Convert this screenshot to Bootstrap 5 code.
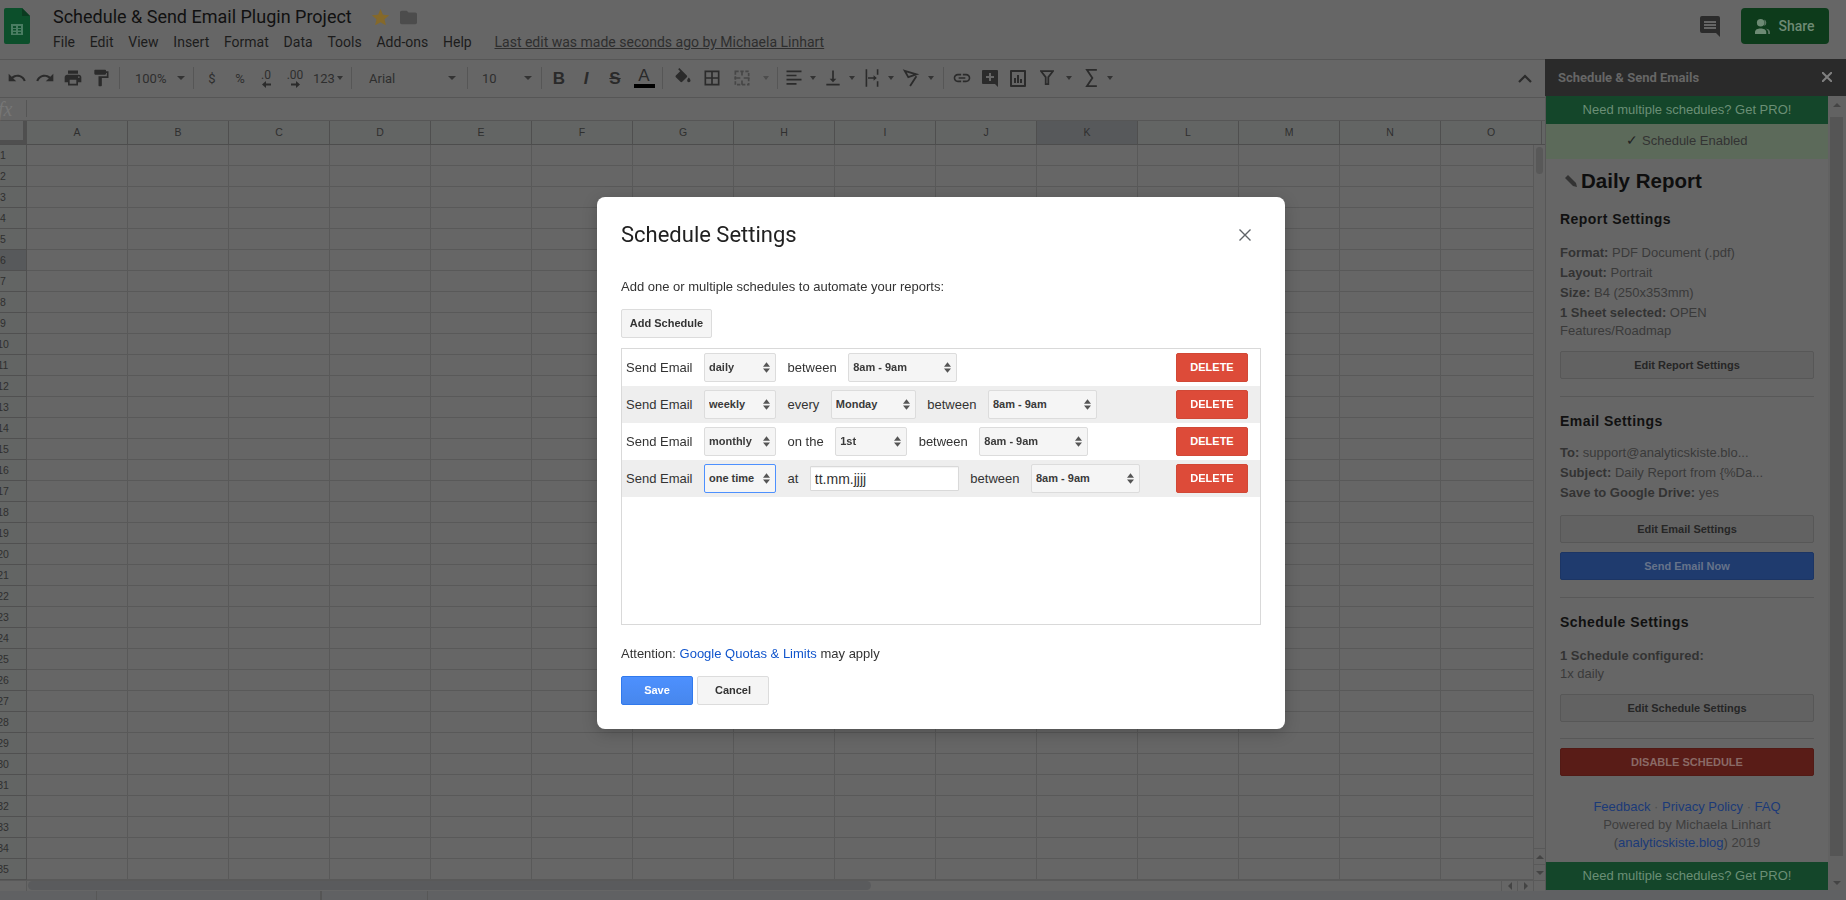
<!DOCTYPE html>
<html lang="en">
<head>
    <meta charset="UTF-8">
    <meta name="viewport" content="width=device-width, initial-scale=1.0">
    <title>Schedule Settings</title>
    <link href="https://cdn.jsdelivr.net/npm/bootstrap@5.3.0/dist/css/bootstrap.min.css" rel="stylesheet">

    <style>
        html, body { height: 100%; overflow: hidden; }
        body { background: #666; font-family: Roboto, "Liberation Sans", sans-serif; color: #222; }

        /* title bar */
        .title-bar { height: 59px; }
        .logo-box { width: 53px; padding: 8px 0 0 4px; }
        .doc-name { font-size: 18px; line-height: 24px; color: #111; padding-top: 3px; height: 31px; }
        .doc-icons svg { display: block; }
        .star-ico { margin-left: 20px; }
        .folder-ico { margin-left: 11px; }
        .menu-row { font-size: 14px; line-height: 20px; color: #1c1c1c; margin-top: 1px; }
        .menu-row span { margin-right: 14.8px; }
        .last-edit { color: #2e2e2e; text-decoration: underline; margin-left: 8px; font-size: 14px; }
        .last-edit:hover { color: #2e2e2e; }
        .comment-ico { margin-right: 21px; }
        .share-btn { width: 88px; height: 36px; margin: 8px 17px 0 0; background: #0d3b1b; border: 0; border-radius: 4px; color: #6d8a74; font-size: 14px; font-weight: 500; }

        /* toolbar */
        .main-area { height: 841px; }
        .work-col { width: 1545px; }
        .tool-row { height: 39px; border-top: 1px solid #565656; border-bottom: 1px solid #565656; padding-left: 3px; color: #2e2e2e; font-size: 13px; }
        .tb { display: flex; align-items: center; justify-content: center; height: 100%; flex: none; }
        .w6 { width: 8px; } .w14 { width: 14px; } .w16 { width: 16px; } .w24 { width: 24px; } .w25 { width: 25px; }
        .w26 { width: 26px; } .w28 { width: 28px; } .w30 { width: 30px; } .w32 { width: 32px; } .w34 { width: 34px; }
        .tb-sep { width: 1px; height: 22px; margin: 0 4px; background: #565656; flex: none; }
        .tb-drop { justify-content: space-between; }
        .drop-zoom { width: 65px; padding: 0 4px 0 11px; }
        .drop-num { width: 35px; padding: 0 4px 0 1px; }
        .drop-font { width: 107px; padding: 0 7px 0 13px; }
        .drop-size { width: 65px; padding: 0 5px 0 10px; }
        .t-caret { width: 0; height: 0; border-left: 4px solid transparent; border-right: 4px solid transparent; border-top: 4px solid #333; flex: none; }
        .t-caret-sm { border-left-width: 3px; border-right-width: 3px; }
        .t-let { font-family: "Liberation Sans", sans-serif; font-size: 17px; font-weight: 700; color: #2a2a2a; }
        .t-it { font-style: italic; }
        .t-a { flex-direction: column; line-height: 15px; font-weight: 400; }
        .t-bar { width: 21px; height: 4px; background: #000; margin-top: 1px; }
        .dec-txt { font-size: 12px; line-height: 12px; flex-direction: column; }
        .chev-up { width: 20px; margin: 0 10px 0 auto; }

        /* formula bar */
        .fx-row { height: 24px; border-bottom: 1px solid #565656; }
        .fx-txt { width: 16px; margin-left: -2px; margin-right: 2px; font-family: "Liberation Serif", serif; font-style: italic; font-size: 20px; line-height: 22px; color: #767676; }
        .fx-sep { width: 1px; height: 17px; margin: 2px 0 0 10px; background: #555; }

        /* sheet */
        .col-heads { height: 24px; border-bottom: 1px solid #4d4d4d; }
        .corner { width: 27px; border-right: 4px solid #4f4f4f; border-bottom: 4px solid #4f4f4f; background: #636464; flex: none; }
        .col-h { width: 101px; flex: none; background: #636564; border-right: 1px solid #4f4f4f; text-align: center; line-height: 22px; font-size: 10.5px; color: #2f2f2f; font-family: "Liberation Sans", sans-serif; }
        .col-last { width: 92px; border-right: 1px solid #4f4f4f; }
        .col-sel { background: #57595b; }
        .sheet-body { height: 735px; }
        .row-heads { width: 27px; flex: none; overflow: hidden; }
        .row-h { height: 21px; background: #636564; border-right: 1px solid #4f4f4f; border-bottom: 1px solid #505050; font-size: 10.5px; line-height: 21px; color: #2f2f2f; font-family: "Liberation Sans", sans-serif; position: relative; }
        .row-h span { position: absolute; right: 23px; transform: translateX(50%); }
        .row-sel { background: #57595b; }
        .cells { width: 1506px; flex: none; background-color: #666; background-image: linear-gradient(to right, transparent 100px, #595959 100px), linear-gradient(to bottom, transparent 20px, #595959 20px); background-size: 101px 21px; }
        .v-scroll { width: 12px; flex: none; border-left: 1px solid #595959; background: #656565; padding-top: 2px; }
        .v-thumb { width: 7px; height: 27px; margin-left: 2px; background: #585858; border-radius: 4px; }
        .arrow-cell { height: 16px; border-top: 1px solid #595959; display: flex; align-items: center; justify-content: center; }
        .h-scroll { height: 11px; border-top: 1px solid #595959; }
        .h-left { width: 27px; border-right: 1px solid #595959; flex: none; }
        .h-thumb { width: 843px; height: 9px; margin-left: 1px; background: #5a5b5d; border-radius: 5px; }
        .h-arrow { width: 16px; border-left: 1px solid #595959; display: flex; align-items: center; justify-content: center; flex: none; }
        .h-gap { width: 12px; flex: none; border-left: 1px solid #595959; }
        .arr { width: 0; height: 0; border-style: solid; border-color: transparent; }
        .arr-up { border-width: 0 4px 4px; border-bottom-color: #444; }
        .arr-down { border-width: 4px 4px 0; border-top-color: #444; }
        .arr-left { border-width: 4px 4px 4px 0; border-right-color: #444; }
        .arr-right { border-width: 4px 0 4px 4px; border-left-color: #444; }
        .tab-bar { height: 9px; background: #606163; flex: none; }
        .tab-s1 { width: 97px; border-right: 1px solid #575757; }
        .tab-s2 { width: 225px; border-right: 2px solid #555; }
        .tab-s3 { width: 106px; border-right: 1px solid #575757; }

        /* sidebar */
        .side-panel { width: 301px; flex: none; font-family: "Liberation Sans", sans-serif; color: #3c3c3c; font-size: 13px; }
        .side-head { height: 37px; background: #2a2a2a; padding: 0 14px 0 13px; color: #666; font-family: Roboto, sans-serif; font-weight: 700; font-size: 13px; }
        .side-wrap { height: 795px; }
        .side-main { width: 283px; flex: none; border-left: 1px solid #575757; }
        .side-scroll { width: 18px; flex: none; background: #626262; padding: 2px 3px 0 2px; }
        .side-thumb { height: 739px; margin-top: 5px; background: #555; }
        .side-arr { height: 14px; display: flex; align-items: center; justify-content: center; }
        .pro-banner { height: 28px; background: #14462a; color: #6b8f76; text-align: center; line-height: 27px; font-size: 13px; flex: none; }
        .on-banner { height: 35px; background: #5c6a5a; color: #333; text-align: center; line-height: 34px; font-size: 13px; flex: none; }
        .on-check { font-size: 14px; line-height: 14px; color: #222; }
        .side-body { padding: 0 14px; }
        .rep-title { font-size: 20.5px; font-weight: 700; line-height: 24px; margin: 10px 0 0 5px; color: #0e0e0e; }
        .sec-title { font-size: 14px; font-weight: 700; line-height: 20px; letter-spacing: .45px; color: #111; margin: 0; }
        .mt16 { margin-top: 16px; } .mt14 { margin-top: 14px; }
        .info-line { line-height: 18px; margin: 0 0 2px; color: #3a3a3a; }
        .info-line b { color: #333; }
        .info-first { margin-top: 13px; }
        .info-top { margin-top: 15px; }
        .nb { margin-bottom: 0; }
        .side-btn { display: block; width: 100%; height: 28px; padding: 0; border: 1px solid #575757; border-radius: 2px; background: #626262; color: #262626; font-size: 11px; font-weight: 700; }
        .side-btn:hover { background: #626262; color: #262626; border-color: #575757; }
        .mt9 { margin-top: 9px; } .mt11 { margin-top: 11px; } .mt13 { margin-top: 13px; }
        .btn-send, .btn-send:hover { background: #1f3b6e; border-color: #1c3564; color: #66738a; }
        .btn-off, .btn-off:hover { background: #591c17; border-color: #521a15; color: #8a6a66; }
        .side-rule { margin: 17px 0 0; height: 1px; border: 0; background: #585858; opacity: 1; }
        .rule-c { margin-top: 16px; }
        .foot-txt { margin-top: 22px; line-height: 18px; text-align: center; color: #3e3e3e; }
        .foot-txt a, .foot-txt a:hover { color: #1b3a78; text-decoration: none; }
        .foot-txt i { font-style: normal; color: #4d4d4d; }
        .side-tail { height: 10px; background: #606163; flex: none; }

        /* dialog */
        .dlg.modal { z-index: 1000; font-family: "Liberation Sans", sans-serif; }
        .dlg-box.modal-dialog { max-width: 688px; width: 688px; margin: 197px 0 0 597px; }
        .dlg-box .modal-content { height: 532px; border: 0; border-radius: 8px; padding: 0 24px; color: #333; font-size: 13px; box-shadow: 0 4px 16px rgba(0,0,0,.2); }
        .dlg-title { font-family: Roboto, sans-serif; font-size: 22px; font-weight: 400; line-height: 28px; color: #212121; margin: 24px 0 0; }
        .dlg-close { border: 0; background: none; padding: 0; width: 12px; height: 12px; margin: 0 10px 0 0; display: flex; }
        .dlg-hint { margin: 29px 0 0; line-height: 18px; }
        .plain-btn { height: 29px; padding: 0; border: 1px solid #dcdcdc; border-radius: 2px; background: #f5f5f5; color: #333; font-size: 11px; font-weight: 700; }
        .plain-btn:hover { background: #f5f5f5; color: #333; border-color: #dcdcdc; }
        .add-btn { width: 91px; margin-top: 13px; }
        .sched-box { height: 277px; margin-top: 10px; width: 640px; border: 1px solid #d9d9d9; }
        .sched-row { height: 37px; padding: 0 12px 0 4px; gap: 11.5px; flex: none; }
        .sched-row:nth-child(even) { background: #eee; }
        .sched-row > span { font-size: 13px; white-space: nowrap; }
        .sched-lab { width: 66.500px; }
        .sched-sel.form-select { height: 29px; min-height: 0; padding: 0 14px 0 4px; border: 1px solid #dcdcdc; border-radius: 2px; background-color: #f5f5f5; color: #3a3a3a; font-size: 11px; font-weight: 700; box-shadow: none; flex: none;
            background-image: url("data:image/svg+xml,%3Csvg xmlns='http://www.w3.org/2000/svg' viewBox='0 0 8 12'%3E%3Cpath fill='%23555' d='M4 0l4 5H0zM4 12L0 7h8z'/%3E%3C/svg%3E");
            background-size: 7px 11px; background-position: right 5px center; }
        .sw72 { width: 72px; } .sw85 { width: 85px; } .sw109 { width: 109px; }
        .sched-sel.sel-focus { border-color: #4d90fe; }
        .date-in.form-control { width: 149px; height: 25px; min-height: 0; padding: 0 4px; border: 1px solid #d9d9d9; border-radius: 1px; font-size: 14px; color: #333; flex: none; box-shadow: inset 0 1px 1px rgba(0,0,0,.05); }
        .del-btn, .del-btn:hover { width: 72px; height: 29px; padding: 0; margin-left: auto; background: #dd4b39; border: 1px solid #d14836; border-radius: 2px; color: #fff; font-size: 11px; font-weight: 700; flex: none; }
        .dlg-note { margin: 20px 0 0; line-height: 18px; }
        .dlg-note a, .dlg-note a:hover { color: #1155cc; text-decoration: none; }
        .dlg-actions { margin-top: 13px; gap: 4px; }
        .save-btn, .save-btn:hover { width: 72px; height: 29px; padding: 0; background: linear-gradient(#4d90fe, #4787ed); border: 1px solid #3079ed; border-radius: 2px; color: #fff; font-size: 11px; font-weight: 700; }
        .cancel-btn { width: 72px; }
    </style>
</head>
<body>
    <!-- title bar -->
    <div class="title-bar d-flex">
        <div class="logo-box">
            <svg width="26" height="36" viewBox="0 0 26 36">
                <path d="M2 0h16l8 8v26a2 2 0 0 1-2 2H2a2 2 0 0 1-2-2V2a2 2 0 0 1 2-2z" fill="#0c4f2b"/>
                <path d="M18 0l8 8h-8z" fill="#0a3b20"/>
                <path d="M7 16h12v11H7z" fill="#4a7d62"/>
                <path d="M9 18h3v2H9zM14 18h3v2h-3zM9 21h3v1.500H9zM14 21h3v1.500h-3zM9 24h3v1.500H9zM14 24h3v1.500h-3z" fill="#0c4f2b"/>
            </svg>
        </div>
        <div class="flex-grow-1">
            <div class="doc-name d-flex align-items-center doc-icons">
                <span>Schedule &amp; Send Email Plugin Project</span>
                <svg class="star-ico" width="17" height="16" viewBox="0 0 24 23"><path fill="#85692a" d="M12 0l3.500 8.300 9 .7-6.800 5.900 2.100 8.700L12 18.900l-7.800 4.700 2.100-8.700L-.5 9l9-.7z"/></svg>
                <svg class="folder-ico" width="17" height="15" viewBox="0 0 20 16"><path fill="#4c4c4c" d="M8 0H2C.9 0 0 .9 0 2v12c0 1.100.9 2 2 2h16c1.100 0 2-.9 2-2V4c0-1.100-.9-2-2-2h-8z"/></svg>
            </div>
            <div class="menu-row d-flex">
                <span>File</span><span>Edit</span><span>View</span><span>Insert</span><span>Format</span><span>Data</span><span>Tools</span><span>Add-ons</span><span>Help</span>
                <a class="last-edit" href="#">Last edit was made seconds ago by Michaela Linhart</a>
            </div>
        </div>
        <div class="d-flex align-items-start">
            <svg class="comment-ico mt-3" width="20" height="21" viewBox="0 0 20 21">
                <path fill="#2b2b2b" d="M2 0h16a2 2 0 0 1 2 2v19l-4-4H2a2 2 0 0 1-2-2V2a2 2 0 0 1 2-2z"/>
                <path fill="#666" d="M4 5h12v2H4zM4 8h12v2H4zM4 11h12v2H4z"/>
            </svg>
            <button class="share-btn btn d-flex align-items-center justify-content-center gap-2 p-0">
                <svg width="15" height="15" viewBox="0 0 16 16"><circle cx="6" cy="4" r="4" fill="#6d8a74"/><path fill="#6d8a74" d="M0 16v-2c0-3 3-4 6-4s6 1 6 4v2z"/><path fill="#5a7562" d="M10 .5a4 4 0 0 1 0 7zM11 10c3 .3 5 1.500 5 4v2h-2v-2c0-1.500-1-3-3-4z"/></svg>
                Share
            </button>
        </div>
    </div>

    <div class="main-area d-flex">
        <div class="work-col d-flex flex-column">
            <!-- toolbar -->
            <div class="tool-row d-flex align-items-center">
                <span class="tb w28"><svg width="20" height="20" viewBox="0 0 24 24"><path fill="#2b2b2b" d="M12.500 8c-2.650 0-5.050.99-6.900 2.600L2 7v9h9l-3.620-3.620c1.390-1.160 3.160-1.880 5.120-1.880 3.540 0 6.550 2.310 7.600 5.500l2.370-.78C21.080 11.030 17.150 8 12.500 8z"/></svg></span>
                <span class="tb w28"><svg width="20" height="20" viewBox="0 0 24 24"><path fill="#2b2b2b" d="M18.400 10.600C16.550 8.990 14.150 8 11.500 8c-4.650 0-8.580 3.030-9.960 7.220L3.900 16c1.050-3.190 4.050-5.500 7.600-5.500 1.950 0 3.730.72 5.120 1.880L13 16h9V7l-3.600 3.600z"/></svg></span>
                <span class="tb w28"><svg width="20" height="20" viewBox="0 0 24 24"><path fill="#2b2b2b" d="M19 8H5c-1.660 0-3 1.340-3 3v6h4v4h12v-4h4v-6c0-1.660-1.340-3-3-3zm-3 11H8v-5h8v5zm3-7c-.55 0-1-.45-1-1s.45-1 1-1 1 .45 1 1-.45 1-1 1zm-1-9H6v4h12V3z"/></svg></span>
                <span class="tb w28"><svg width="20" height="20" viewBox="0 0 24 24"><path fill="#2b2b2b" d="M18 4V3c0-.55-.45-1-1-1H5c-.55 0-1 .45-1 1v4c0 .55.45 1 1 1h12c.55 0 1-.45 1-1V6h1v4H9v11c0 .55.45 1 1 1h2c.55 0 1-.45 1-1v-9h8V4h-3z"/></svg></span>
                <span class="tb-sep"></span>
                <span class="tb tb-drop drop-zoom"><span>100%</span><i class="t-caret"></i></span>
                <span class="tb-sep"></span>
                <span class="tb w28">$</span>
                <span class="tb w28">%</span>
                <span class="tb w24 dec-txt"><span>.0</span><svg width="9" height="7" viewBox="0 0 9 7"><path fill="#2b2b2b" d="M0 3.500L4 0v2.500h5v2H4V7z"/></svg></span>
                <span class="tb w34 dec-txt"><span>.00</span><svg width="9" height="7" viewBox="0 0 9 7"><path fill="#2b2b2b" d="M9 3.500L5 0v2.500H0v2h5V7z"/></svg></span>
                <span class="tb tb-drop drop-num"><span>123</span><i class="t-caret t-caret-sm"></i></span>
                <span class="tb-sep"></span>
                <span class="tb tb-drop drop-font"><span>Arial</span><i class="t-caret"></i></span>
                <span class="tb-sep"></span>
                <span class="tb tb-drop drop-size"><span>10</span><i class="t-caret"></i></span>
                <span class="tb-sep"></span>
                <span class="tb w26 t-let">B</span>
                <span class="tb w28 t-let t-it">I</span>
                <span class="tb w30 t-let"><s>S</s></span>
                <span class="tb w28 t-let t-a"><span>A</span><i class="t-bar"></i></span>
                <span class="tb-sep"></span>
                <span class="tb w32"><svg width="20" height="20" viewBox="0 0 24 24"><path fill="#2b2b2b" d="M16.560 8.940L7.620 0 6.210 1.410l2.380 2.380-5.150 5.150c-.59.59-.59 1.540 0 2.120l5.500 5.500c.29.29.68.44 1.060.44s.77-.15 1.060-.44l5.500-5.500c.59-.58.59-1.530 0-2.120zM19 11.500s-2 2.170-2 3.500c0 1.100.9 2 2 2s2-.9 2-2c0-1.330-2-3.500-2-3.500z"/></svg></span>
                <span class="tb w26"><svg width="20" height="20" viewBox="0 0 24 24"><path fill="#2b2b2b" d="M3 3v18h18V3H3zm8 16H5v-6h6v6zm0-8H5V5h6v6zm8 8h-6v-6h6v6zm0-8h-6V5h6v6z"/></svg></span>
                <span class="tb w34"><svg width="20" height="20" viewBox="0 0 24 24"><path fill="none" stroke="#474747" stroke-width="2" stroke-dasharray="4 2" d="M4 4h16v16H4z"/><path fill="#474747" d="M3 11h7v2H3zM14 11h7v2h-7zM11 4h2v5h-2zM11 15h2v5h-2z"/></svg></span>
                <span class="tb w14"><i class="t-caret t-caret-sm opacity-50"></i></span>
                <span class="tb-sep"></span>
                <span class="tb w24"><svg width="20" height="20" viewBox="0 0 24 24"><path fill="#2b2b2b" d="M3 3h18v2H3zM3 8h12v2H3zM3 13h18v2H3zM3 18h12v2H3z"/></svg></span>
                <span class="tb w14"><i class="t-caret t-caret-sm"></i></span>
                <span class="tb w25"><svg width="20" height="20" viewBox="0 0 24 24"><path fill="#2b2b2b" d="M16 13h-3V3h-2v10H8l4 4 4-4zM4 19v2h16v-2H4z"/></svg></span>
                <span class="tb w14"><i class="t-caret t-caret-sm"></i></span>
                <span class="tb w25"><svg width="16" height="18" viewBox="0 0 20 22"><path fill="#2b2b2b" d="M2 0h2v22H2zM16 0h2v7h-2zM16 15h2v7h-2zM5 10h7V7.500l4 3.500-4 3.500V12H5z"/></svg></span>
                <span class="tb w14"><i class="t-caret t-caret-sm"></i></span>
                <span class="tb w25"><svg width="18" height="18" viewBox="0 0 20 20"><path fill="none" stroke="#2b2b2b" stroke-width="2" d="M3 2l13 4-9 3zM16 8L9 19"/></svg></span>
                <span class="tb w16"><i class="t-caret t-caret-sm"></i></span>
                <span class="tb-sep"></span>
                <span class="tb w28"><svg width="20" height="20" viewBox="0 0 24 24"><path fill="#2b2b2b" d="M3.900 12c0-1.710 1.390-3.100 3.100-3.100h4V7H7c-2.760 0-5 2.240-5 5s2.240 5 5 5h4v-1.900H7c-1.710 0-3.100-1.390-3.100-3.100zM8 13h8v-2H8v2zm9-6h-4v1.900h4c1.710 0 3.100 1.390 3.100 3.100s-1.390 3.100-3.100 3.100h-4V17h4c2.760 0 5-2.240 5-5s-2.240-5-5-5z"/></svg></span>
                <span class="tb w28"><svg width="16" height="17" viewBox="0 0 16 17"><path fill="#2b2b2b" d="M1 0h14a1 1 0 0 1 1 1v16l-3-3H1a1 1 0 0 1-1-1V1a1 1 0 0 1 1-1z"/><path fill="#666" d="M7 3h2v3h3v2H9v3H7V8H4V6h3z"/></svg></span>
                <span class="tb w28"><svg width="16" height="17" viewBox="0 0 16 17"><path fill="#2b2b2b" d="M1 0h14a1 1 0 0 1 1 1v15a1 1 0 0 1-1 1H1a1 1 0 0 1-1-1V1a1 1 0 0 1 1-1zm1 2v13h12V2z"/><path fill="#2b2b2b" d="M4 8h2v5H4zM7 5h2v8H7zM10 9h2v4h-2z"/></svg></span>
                <span class="tb w30"><svg width="14" height="16" viewBox="0 0 16 18"><path fill="none" stroke="#2b2b2b" stroke-width="2" d="M1 1h14L9.500 8v8h-3V8z"/></svg></span>
                <span class="tb w14"><i class="t-caret t-caret-sm"></i></span>
                <span class="tb w30"><svg width="12" height="18" viewBox="0 0 13 20"><path fill="none" stroke="#2b2b2b" stroke-width="2" d="M13 1H2l6 9-6 9h11"/></svg></span>
                <span class="tb w6"><i class="t-caret t-caret-sm"></i></span>
                <span class="tb chev-up"><svg width="14" height="9" viewBox="0 0 14 9"><path fill="none" stroke="#2b2b2b" stroke-width="2.200" d="M1 8l6-6 6 6"/></svg></span>
            </div>

            <!-- formula bar -->
            <div class="fx-row d-flex">
                <span class="fx-txt">fx</span>
                <span class="fx-sep"></span>
            </div>

            <!-- sheet -->
            <div class="col-heads d-flex" id="col-heads"><div class="corner"></div></div>
            <div class="sheet-body d-flex">
                <div class="row-heads" id="row-heads"></div>
                <div class="cells"></div>
                <div class="v-scroll d-flex flex-column">
                    <div class="v-thumb"></div>
                    <div class="arrow-cell mt-auto"><i class="arr arr-up"></i></div>
                    <div class="arrow-cell"><i class="arr arr-down"></i></div>
                </div>
            </div>
            <div class="h-scroll d-flex">
                <div class="h-left"></div>
                <div class="h-thumb"></div>
                <div class="h-arrow ms-auto"><i class="arr arr-left"></i></div>
                <div class="h-arrow"><i class="arr arr-right"></i></div>
                <div class="h-gap"></div>
            </div>
            <div class="tab-bar d-flex">
                <div class="tab-s1"></div><div class="tab-s2"></div><div class="tab-s3"></div>
            </div>
        </div>

        <!-- sidebar -->
        <div class="side-panel d-flex flex-column">
            <div class="side-head d-flex align-items-center justify-content-between">
                <span>Schedule &amp; Send Emails</span>
                <svg width="10" height="10" viewBox="0 0 10 10"><path stroke="#808080" stroke-width="2" d="M0 0l10 10M10 0L0 10"/></svg>
            </div>
            <div class="side-wrap d-flex">
                <div class="side-main d-flex flex-column">
                    <div class="pro-banner">Need multiple schedules? Get PRO!</div>
                    <div class="on-banner"><span class="on-check">✓</span> Schedule Enabled</div>
                    <div class="side-body flex-grow-1">
                        <h1 class="rep-title d-flex align-items-center gap-1">
                            <svg width="12" height="12" viewBox="0 0 12 12"><path fill="#333" d="M0 3l3-3 8 8 1 4-4-1zM1.500 3l1.500-1.500 1 1L2.500 4z"/></svg>
                            Daily Report
                        </h1>
                        <h2 class="sec-title mt16">Report Settings</h2>
                        <p class="info-line info-top"><b>Format:</b> PDF Document (.pdf)</p>
                        <p class="info-line"><b>Layout:</b> Portrait</p>
                        <p class="info-line"><b>Size:</b> B4 (250x353mm)</p>
                        <p class="info-line"><b>1 Sheet selected:</b> OPEN Features/Roadmap</p>
                        <button class="side-btn btn mt11">Edit Report Settings</button>
                        <hr class="side-rule">
                        <h2 class="sec-title mt14">Email Settings</h2>
                        <p class="info-line info-first"><b>To:</b> support@analyticskiste.blo...</p>
                        <p class="info-line"><b>Subject:</b> Daily Report from {%Da...</p>
                        <p class="info-line"><b>Save to Google Drive:</b> yes</p>
                        <button class="side-btn btn mt13">Edit Email Settings</button>
                        <button class="side-btn btn btn-send mt9">Send Email Now</button>
                        <hr class="side-rule">
                        <h2 class="sec-title mt14">Schedule Settings</h2>
                        <p class="info-line info-top nb"><b>1 Schedule configured:</b></p>
                        <p class="info-line nb">1x daily</p>
                        <button class="side-btn btn mt11">Edit Schedule Settings</button>
                        <hr class="side-rule rule-c">
                        <button class="side-btn btn btn-off mt9">DISABLE SCHEDULE</button>
                        <div class="foot-txt">
                            <a href="#">Feedback</a> <i>·</i> <a href="#">Privacy Policy</a> <i>·</i> <a href="#">FAQ</a><br>
                            Powered by Michaela Linhart<br>
                            (<a href="#">analyticskiste.blog</a>) 2019
                        </div>
                    </div>
                    <div class="pro-banner">Need multiple schedules? Get PRO!</div>
                </div>
                <div class="side-scroll d-flex flex-column">
                    <div class="side-arr"><i class="arr arr-up"></i></div>
                    <div class="side-thumb"></div>
                    <div class="side-arr mt-auto"><i class="arr arr-down"></i></div>
                </div>
            </div>
            <div class="side-tail"></div>
        </div>
    </div>

    <!-- dialog -->
    <div class="dlg modal d-block">
        <div class="dlg-box modal-dialog">
            <div class="modal-content">
                <div class="d-flex justify-content-between align-items-center">
                    <h5 class="dlg-title">Schedule Settings</h5>
                    <button class="dlg-close mt-4" aria-label="Close"><svg width="12" height="12" viewBox="0 0 12 12"><path stroke="#5f6368" stroke-width="1.400" d="M.5.5l11 11M11.500.5l-11 11"/></svg></button>
                </div>
                <p class="dlg-hint">Add one or multiple schedules to automate your reports:</p>
                <div><button class="plain-btn btn add-btn">Add Schedule</button></div>
                <div class="sched-box d-flex flex-column">
                    <div class="sched-row d-flex align-items-center">
                        <span class="sched-lab">Send Email</span>
                        <select class="sched-sel form-select sw72"><option>daily</option></select>
                        <span>between</span>
                        <select class="sched-sel form-select sw109"><option>8am - 9am</option></select>
                        <button class="del-btn btn">DELETE</button>
                    </div>
                    <div class="sched-row d-flex align-items-center">
                        <span class="sched-lab">Send Email</span>
                        <select class="sched-sel form-select sw72"><option>weekly</option></select>
                        <span>every</span>
                        <select class="sched-sel form-select sw85"><option>Monday</option></select>
                        <span>between</span>
                        <select class="sched-sel form-select sw109"><option>8am - 9am</option></select>
                        <button class="del-btn btn">DELETE</button>
                    </div>
                    <div class="sched-row d-flex align-items-center">
                        <span class="sched-lab">Send Email</span>
                        <select class="sched-sel form-select sw72"><option>monthly</option></select>
                        <span>on the</span>
                        <select class="sched-sel form-select sw72"><option>1st</option></select>
                        <span>between</span>
                        <select class="sched-sel form-select sw109"><option>8am - 9am</option></select>
                        <button class="del-btn btn">DELETE</button>
                    </div>
                    <div class="sched-row d-flex align-items-center">
                        <span class="sched-lab">Send Email</span>
                        <select class="sched-sel sel-focus form-select sw72"><option>one time</option></select>
                        <span>at</span>
                        <input class="date-in form-control" type="text" value="tt.mm.jjjj">
                        <span>between</span>
                        <select class="sched-sel form-select sw109"><option>8am - 9am</option></select>
                        <button class="del-btn btn">DELETE</button>
                    </div>
                </div>
                <p class="dlg-note">Attention: <a href="#">Google Quotas &amp; Limits</a> may apply</p>
                <div class="dlg-actions d-flex">
                    <button class="save-btn btn">Save</button>
                    <button class="plain-btn btn cancel-btn">Cancel</button>
                </div>
            </div>
        </div>
    </div>

    <script src="https://cdn.jsdelivr.net/npm/bootstrap@5.3.0/dist/js/bootstrap.bundle.min.js"></script>
    <script>
        const colHeads = document.getElementById('col-heads');
        'ABCDEFGHIJKLMNO'.split('').forEach(name => {
            const head = document.createElement('div');
            head.className = 'col-h' + (name === 'K' ? ' col-sel' : '');
            head.textContent = name;
            colHeads.appendChild(head);
        });
        const lastCol = document.createElement('div');
        lastCol.className = 'col-h col-last';
        colHeads.appendChild(lastCol);

        const rowHeads = document.getElementById('row-heads');
        for (let i = 1; i <= 35; i++) {
            const row = document.createElement('div');
            row.className = 'row-h' + (i === 6 ? ' row-sel' : '');
            row.innerHTML = `<span>${i}</span>`;
            rowHeads.appendChild(row);
        }
    </script>
</body>
</html>
